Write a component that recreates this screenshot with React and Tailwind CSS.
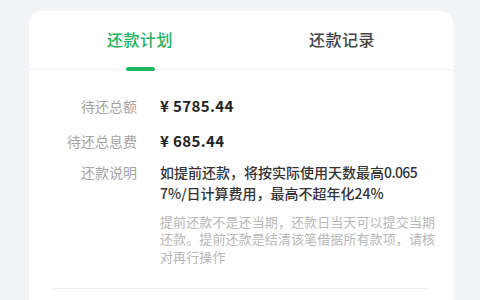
export default function App() {
  const font = { fontFamily: '"Noto Sans CJK SC", "Noto Sans", sans-serif' };
  return (
    <div className="w-[480px] h-[300px] overflow-hidden bg-[#f3f4f8] pt-[11px] pl-[29px] pr-[27px]" style={font}>
      <div className="bg-white rounded-[12px] h-[320px] flex flex-col">
        <div className="flex px-[10px] h-[59px] border-b border-[#f2f2f4]">
          <div className="flex-1 flex flex-col items-center justify-end">
            <div className="text-[16px] leading-[20px] font-medium text-[#1fb062] tracking-[0.5px]">还款计划</div>
            <div className="mt-[18px] -mb-[2px] w-[29px] h-[4px] rounded-full bg-[#1eb865]"></div>
          </div>
          <div className="flex-1 flex flex-col items-center justify-end">
            <div className="text-[16px] leading-[20px] font-medium text-[#444] tracking-[0.5px]">还款记录</div>
            <div className="mt-[18px] -mb-[2px] h-[4px]"></div>
          </div>
        </div>
        <div className="px-[24px] pt-[26px]">
          <div className="flex h-[20px] items-center">
            <div className="w-[84px] shrink-0 text-right text-[14px] text-[#a3a3a3]">待还总额</div>
            <div className="ml-[23px] text-[15px] font-bold text-[#222] tracking-[0.4px]">¥ 5785.44</div>
          </div>
          <div className="flex h-[20px] items-center mt-[15px]">
            <div className="w-[84px] shrink-0 text-right text-[14px] text-[#a3a3a3]">待还总息费</div>
            <div className="ml-[23px] text-[15px] font-bold text-[#222] tracking-[0.4px]">¥ 685.44</div>
          </div>
          <div className="flex mt-[11px]">
            <div className="w-[84px] shrink-0 text-right text-[14px] leading-[21px] text-[#a3a3a3]">还款说明</div>
            <div className="ml-[23px] min-w-0">
              <div className="text-[14px] leading-[21px] font-medium text-[#333] whitespace-nowrap">
                如提前还款，将按实际使用天数最高<span className="tracking-[-0.6px]">0.065</span><br />7%/日计算费用，最高不超年化24%
              </div>
              <div className="mt-[9px] text-[13px] leading-[17.3px] text-[#b7b7b7] whitespace-nowrap tracking-[0.1px]">
                提前还款不是还当期，还款日当天可以提交当期<br />还款。提前还款是结清该笔借据所有款项，请核<br />对再行操作
              </div>
            </div>
          </div>
          <div className="mt-[23px] border-t border-[#f2f2f4]"></div>
        </div>
      </div>
    </div>
  );
}
